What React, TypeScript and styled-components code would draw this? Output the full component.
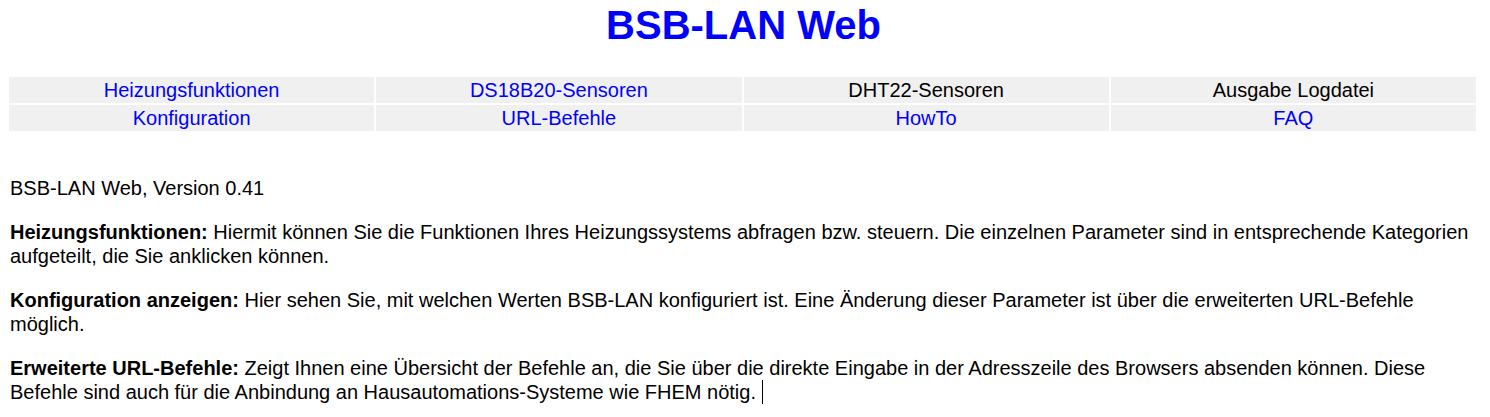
import React from "react";
import styled, { createGlobalStyle } from "styled-components";

const GlobalStyle = createGlobalStyle`
  body {
    margin: 0;
    background: #ffffff;
    color: #000000;
    font-family: "Liberation Sans", Arial, sans-serif;
    font-size: 20px;
    line-height: 24px;
  }
`;

const Page = styled.main`
  padding: 2px 14px 0 9px;
`;

const Title = styled.h1`
  margin: 0 0 29px;
  padding-left: 2px;
  color: #0000ff;
  font-size: 40px;
  line-height: 46px;
  font-weight: bold;
  text-align: center;
`;

const Menu = styled.nav`
  display: grid;
  grid-template-columns: repeat(4, 1fr);
  gap: 2px;
  margin: 0 0 45px;
`;

const MenuCell = styled.div`
  padding: 1px;
  background: #f0f0f0;
  text-align: center;
`;

const MenuLink = styled.a`
  color: #0000ff;
  text-decoration: none;
`;

const Paragraph = styled.p`
  margin: 0 0 20px;
  padding: 0 1px;

  &:last-child {
    margin-bottom: 0;
  }
`;

const Caret = styled.span`
  display: inline-block;
  width: 1px;
  height: 24px;
  margin-left: 6px;
  background: #000000;
  vertical-align: top;
`;

const menuItems = [
  { label: "Heizungsfunktionen", href: "#heizung" },
  { label: "DS18B20-Sensoren", href: "#ds18b20" },
  { label: "DHT22-Sensoren" },
  { label: "Ausgabe Logdatei" },
  { label: "Konfiguration", href: "#konfiguration" },
  { label: "URL-Befehle", href: "#url-befehle" },
  { label: "HowTo", href: "#howto" },
  { label: "FAQ", href: "#faq" },
];

export default function App() {
  return (
    <>
      <GlobalStyle />
      <Page>
        <Title>BSB-LAN Web</Title>
        <Menu>
          {menuItems.map(({ label, href }) => (
            <MenuCell key={label}>
              {href ? <MenuLink href={href}>{label}</MenuLink> : label}
            </MenuCell>
          ))}
        </Menu>
        <Paragraph>BSB-LAN Web, Version 0.41</Paragraph>
        <Paragraph>
          <b>Heizungsfunktionen:</b> Hiermit können Sie die Funktionen Ihres Heizungssystems
          abfragen bzw. steuern. Die einzelnen Parameter sind in entsprechende Kategorien
          aufgeteilt, die Sie anklicken können.
        </Paragraph>
        <Paragraph>
          <b>Konfiguration anzeigen:</b> Hier sehen Sie, mit welchen Werten BSB-LAN konfiguriert
          ist. Eine Änderung dieser Parameter ist über die erweiterten URL-Befehle möglich.
        </Paragraph>
        <Paragraph>
          <b>Erweiterte URL-Befehle:</b> Zeigt Ihnen eine Übersicht der Befehle an, die Sie über
          die direkte Eingabe in der Adresszeile des Browsers absenden können. Diese Befehle sind
          auch für die Anbindung an Hausautomations-Systeme wie FHEM nötig.
          <Caret />
        </Paragraph>
      </Page>
    </>
  );
}
